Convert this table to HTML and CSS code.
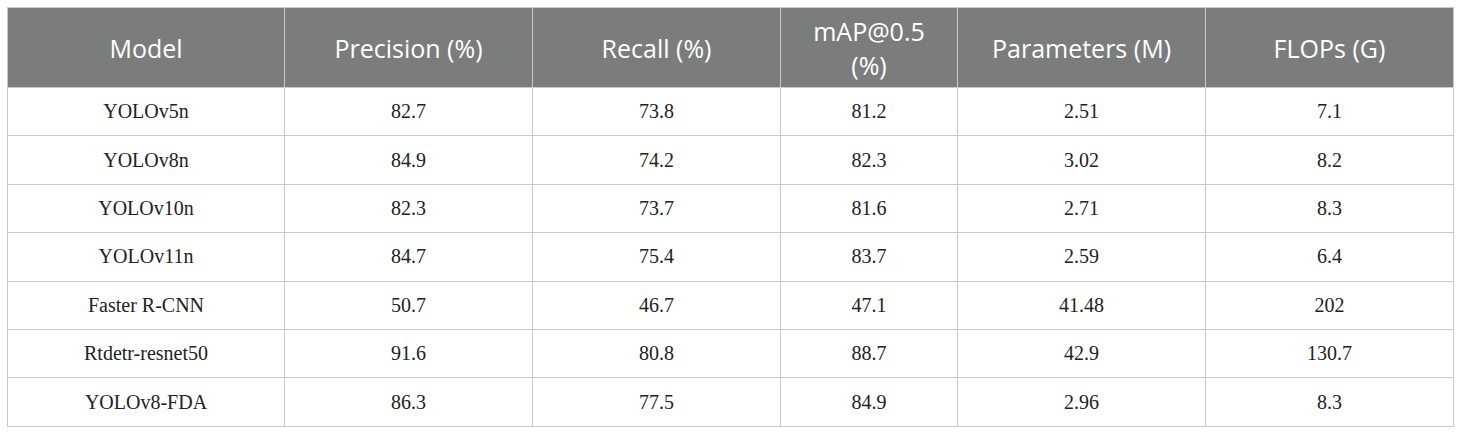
FILE: index.html
```html
<!DOCTYPE html>
<html>
<head>
<meta charset="utf-8">
<link rel="stylesheet" href="styles.css">
</head>
<body>
<table class="results">
  <colgroup>
    <col class="c-model">
    <col class="c-wide">
    <col class="c-wide">
    <col class="c-map">
    <col class="c-wide">
    <col class="c-last">
  </colgroup>
  <thead>
    <tr>
      <th>Model</th>
      <th>Precision (%)</th>
      <th>Recall (%)</th>
      <th>mAP@0.5 (%)</th>
      <th>Parameters (M)</th>
      <th>FLOPs (G)</th>
    </tr>
  </thead>
  <tbody>
    <tr><td>YOLOv5n</td><td>82.7</td><td>73.8</td><td>81.2</td><td>2.51</td><td>7.1</td></tr>
    <tr><td>YOLOv8n</td><td>84.9</td><td>74.2</td><td>82.3</td><td>3.02</td><td>8.2</td></tr>
    <tr><td>YOLOv10n</td><td>82.3</td><td>73.7</td><td>81.6</td><td>2.71</td><td>8.3</td></tr>
    <tr><td>YOLOv11n</td><td>84.7</td><td>75.4</td><td>83.7</td><td>2.59</td><td>6.4</td></tr>
    <tr><td>Faster R-CNN</td><td>50.7</td><td>46.7</td><td>47.1</td><td>41.48</td><td>202</td></tr>
    <tr><td>Rtdetr-resnet50</td><td>91.6</td><td>80.8</td><td>88.7</td><td>42.9</td><td>130.7</td></tr>
    <tr><td>YOLOv8-FDA</td><td>86.3</td><td>77.5</td><td>84.9</td><td>2.96</td><td>8.3</td></tr>
  </tbody>
</table>
</body>
</html>
```

FILE: styles.css
```css
html, body {
  margin: 0;
  padding: 0;
  background: #ffffff;
}
body {
  padding: 7px;
}
.results {
  border-collapse: collapse;
  table-layout: fixed;
  width: 1446px;
}
.c-model { width: 277px; }
.c-wide { width: 248px; }
.c-map { width: 177px; }
.c-last { width: 248px; }
.results th,
.results td {
  border: 1px solid #c9c9c9;
  text-align: center;
  vertical-align: middle;
  padding: 0 16px;
}
.results th {
  background: #7b7d7c;
  color: #ffffff;
  font-family: "Open Sans", "Noto Sans", sans-serif;
  font-weight: 400;
  font-size: 25px;
  line-height: 34px;
  height: 80px;
  box-sizing: border-box;
}
.results td {
  font-family: "Liberation Serif", "Times New Roman", serif;
  color: #222222;
  font-size: 20px;
  height: 48.4px;
  box-sizing: border-box;
}
```
